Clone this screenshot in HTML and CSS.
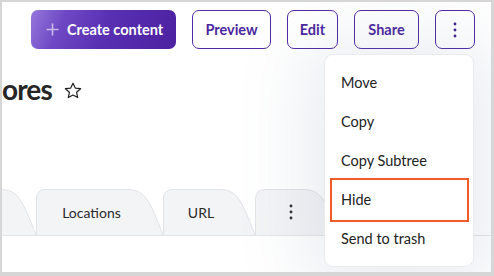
FILE: index.html
```html
<!DOCTYPE html>
<html lang="en">
<head>
<meta charset="utf-8">
<title>Content actions</title>
<link rel="stylesheet" href="styles.css">
</head>
<body>
<div class="frame">
  <div class="toolbar">
    <button class="btn btn-primary"><svg class="plus" width="13" height="13" viewBox="0 0 13 13"><path d="M6.5 0.5v12M0.5 6.5h12" stroke="currentColor" stroke-width="1.6" fill="none"/></svg><span>Create content</span></button>
    <button class="btn btn-outline btn-preview">Preview</button>
    <button class="btn btn-outline btn-edit">Edit</button>
    <button class="btn btn-outline btn-share">Share</button>
    <button class="btn btn-outline btn-icon" aria-label="More"><svg width="4" height="16" viewBox="0 0 4 16"><circle cx="2" cy="2" r="1.4"/><circle cx="2" cy="8" r="1.4"/><circle cx="2" cy="14" r="1.4"/></svg></button>
  </div>

  <div class="title-row">
    <h1 class="title">ores</h1>
    <svg class="star" width="18" height="17" viewBox="0 0 18 17"><path d="M9 1.2l2.3 4.9 5.3.6-4 3.6 1.1 5.3L9 12.9l-4.7 2.7 1.1-5.3-4-3.6 5.3-.6z" fill="none" stroke="#222" stroke-width="1.2" stroke-linejoin="round"/></svg>
  </div>

  <div class="tabs">
    <div class="tab tab-first"><svg class="tab-bg" width="62" height="46" viewBox="0 0 62 46"><path d="M0.5,46 V10 Q0.5,0.5 10,0.5 H26 C44,0.5 48,10 62,46" /></svg><span class="tab-label"></span></div>
    <div class="tab tab-loc"><svg class="tab-bg" width="127" height="46" viewBox="0 0 127 46"><path d="M0.5,46 V10 Q0.5,0.5 10,0.5 H91 C109,0.5 113,10 127,46" /></svg><span class="tab-label">Locations</span></div>
    <div class="tab tab-url"><svg class="tab-bg" width="92" height="46" viewBox="0 0 92 46"><path d="M0.5,46 V10 Q0.5,0.5 10,0.5 H56 C74,0.5 78,10 92,46" /></svg><span class="tab-label">URL</span></div>
    <div class="tab tab-more"><svg class="tab-bg" width="84" height="46" viewBox="0 0 84 46"><path d="M0.5,46 V10 Q0.5,0.5 10,0.5 H48 C66,0.5 70,10 84,46" /></svg><span class="tab-label"><svg width="4" height="16" viewBox="0 0 4 16"><circle cx="2" cy="2" r="1.4"/><circle cx="2" cy="8" r="1.4"/><circle cx="2" cy="14" r="1.4"/></svg></span></div>
  </div>

  <ul class="menu">
    <li class="menu-item">Move</li>
    <li class="menu-item">Copy</li>
    <li class="menu-item">Copy Subtree</li>
    <li class="menu-item menu-item-marked">Hide</li>
    <li class="menu-item">Send to trash</li>
  </ul>
</div>
</body>
</html>
```

FILE: styles.css
```css
* { box-sizing: border-box; }

html, body {
  margin: 0;
  padding: 0;
  background: #ffffff;
}

body {
  font-family: Lato, "Noto Sans", sans-serif;
  color: #222;
}

.frame {
  position: relative;
  width: 494px;
  height: 276px;
  border: 2px solid #d6d6d6;
  border-right-width: 3px;
  border-bottom-width: 4px;
  background: #fff;
  overflow: hidden;
  display: flex;
  flex-direction: column;
}

.toolbar {
  display: flex;
  justify-content: flex-end;
  gap: 16px;
  padding: 8px 16px 0 0;
}

.btn {
  height: 39px;
  border-radius: 7px;
  font-family: inherit;
  font-size: 14.5px;
  font-weight: 700;
  display: inline-flex;
  align-items: center;
  justify-content: center;
  cursor: pointer;
}

.btn-primary {
  width: 145px;
  padding: 0 12px 0 15px;
  gap: 8px;
  border: none;
  color: #fff;
  justify-content: flex-start;
  background: linear-gradient(112deg, #9678dc 0%, #6e48c4 22%, #5a30b3 50%, #4b21a1 100%);
}

.btn-primary .plus {
  color: rgba(255, 255, 255, 0.6);
  flex: none;
}

.btn-outline {
  padding: 0;
  border: 1.5px solid #4f2ba3;
  background: #fff;
  color: #4b27a0;
}

.btn-preview { width: 79px; }
.btn-edit { width: 51px; }
.btn-share { width: 65px; }

.btn-icon {
  width: 40px;
  fill: #3f2390;
}

.title-row {
  display: flex;
  align-items: center;
  gap: 12px;
  margin-top: 22px;
}

.title {
  margin: 0;
  font-size: 28px;
  line-height: 36px;
  font-weight: 700;
  letter-spacing: -0.9px;
  color: #262626;
}

.star {
  margin-top: 2px;
}

.tabs {
  display: flex;
  height: 47px;
  margin-top: 82px;
  border-bottom: 1px solid #e3e5e8;
}

.tab {
  position: relative;
  height: 46px;
  flex: none;
  display: flex;
  align-items: center;
  justify-content: center;
  padding-right: 16px;
}

.tab-bg {
  position: absolute;
  left: 0;
  top: 0;
}

.tab-bg path {
  fill: #f3f4f6;
  stroke: #e1e3e6;
  stroke-width: 1;
}

.tab-label {
  position: relative;
  font-size: 14px;
  color: #2a2a2a;
  display: flex;
  align-items: center;
  fill: #2a2a2a;
}

.tab-first { width: 62px; margin-left: -28px; }
.tab-loc { width: 127px; }
.tab-url { width: 92px; }
.tab-more { width: 84px; padding-right: 12px; }

.menu {
  position: absolute;
  left: 322px;
  top: 52px;
  width: 150px;
  margin: 0;
  padding: 8px 0;
  list-style: none;
  background: #fff;
  border: 1px solid #e9ebee;
  border-radius: 9px;
  box-shadow: 0 4px 70px 16px rgba(110, 130, 160, 0.16);
}

.menu-item {
  position: relative;
  height: 39px;
  line-height: 39px;
  padding-left: 16px;
  font-size: 14.5px;
  color: #222;
}

.menu-item-marked::after {
  content: "";
  position: absolute;
  left: 5px;
  right: 4px;
  top: -2px;
  bottom: -3px;
  border: 2px solid #f25a2a;
}
```
